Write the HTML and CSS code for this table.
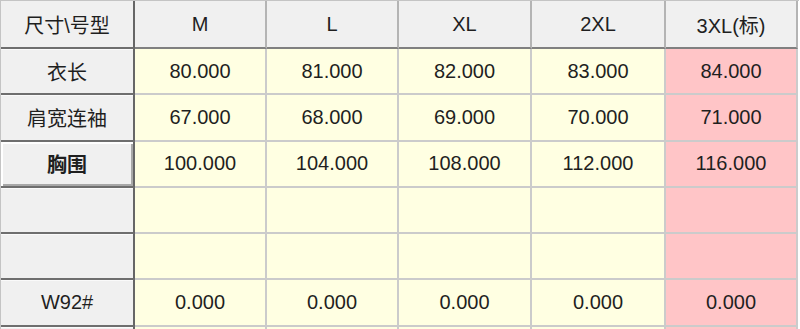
FILE: index.html
```html
<!DOCTYPE html>
<html lang="zh-CN">
<head>
    <meta charset="UTF-8">
    <title>尺寸表</title>
    <link rel="stylesheet" href="styles.css">
</head>
<body>
    <div class="viewport">
        <div class="size-grid">
            <div class="cell corner">尺寸\号型</div>
            <div class="cell head">M</div>
            <div class="cell head">L</div>
            <div class="cell head">XL</div>
            <div class="cell head">2XL</div>
            <div class="cell head">3XL(标)</div>

            <div class="cell rowhead">衣长</div>
            <div class="cell">80.000</div>
            <div class="cell">81.000</div>
            <div class="cell">82.000</div>
            <div class="cell">83.000</div>
            <div class="cell std">84.000</div>

            <div class="cell rowhead">肩宽连袖</div>
            <div class="cell">67.000</div>
            <div class="cell">68.000</div>
            <div class="cell">69.000</div>
            <div class="cell">70.000</div>
            <div class="cell std">71.000</div>

            <div class="cell rowhead active">胸围</div>
            <div class="cell">100.000</div>
            <div class="cell">104.000</div>
            <div class="cell">108.000</div>
            <div class="cell">112.000</div>
            <div class="cell std">116.000</div>

            <div class="cell rowhead"></div>
            <div class="cell"></div>
            <div class="cell"></div>
            <div class="cell"></div>
            <div class="cell"></div>
            <div class="cell std"></div>

            <div class="cell rowhead"></div>
            <div class="cell"></div>
            <div class="cell"></div>
            <div class="cell"></div>
            <div class="cell"></div>
            <div class="cell std"></div>

            <div class="cell rowhead">W92#</div>
            <div class="cell">0.000</div>
            <div class="cell">0.000</div>
            <div class="cell">0.000</div>
            <div class="cell">0.000</div>
            <div class="cell std">0.000</div>

            <!-- next row is cut off at the bottom -->
            <div class="cell rowhead"></div>
            <div class="cell"></div>
            <div class="cell"></div>
            <div class="cell"></div>
            <div class="cell"></div>
            <div class="cell std"></div>
        </div>
    </div>
</body>
</html>
```

FILE: styles.css
```css
body {
    margin: 0;
    background-color: #ffffff;
    font-family: "Liberation Sans", "Noto Sans CJK SC", Arial, sans-serif;
    font-size: 20px;
    color: #1f1f1f;
}
.viewport {
    height: 329px;
    overflow: hidden;
}
.size-grid {
    display: grid;
    grid-template-columns: 134px 132px 132px 133px 134px 132px;
    grid-template-rows: 48px;
    grid-auto-rows: 46.3px;
    width: 798px;
    border-top: 1px solid #c4c4c4;
    border-left: 1px solid #c4c4c4;
}
.cell {
    box-sizing: border-box;
    display: flex;
    align-items: center;
    justify-content: center;
    background-color: #ffffe2; /* light yellow data cells */
    border-right: 2px solid #cbcbcb;
    border-bottom: 2px solid #cbcbcb;
}
.std {
    background-color: #ffc5c7; /* pink for the standard size */
}
.head,
.corner {
    background-color: #f0f0f0;
    border-right: 2px solid #b4b4b4;
    border-bottom: 2px solid #808080;
}
.corner,
.rowhead {
    background-color: #f0f0f0;
    border-right: 2px solid #666666;
    border-bottom: 2px solid #6e6e6e;
}
.rowhead {
    box-shadow: inset 0 1px 0 #fafafa;
}
.active {
    font-weight: bold;
    box-shadow: inset 2px 2px 0 #ffffff, inset -2px -2px 0 #a8a8a8;
}
```
